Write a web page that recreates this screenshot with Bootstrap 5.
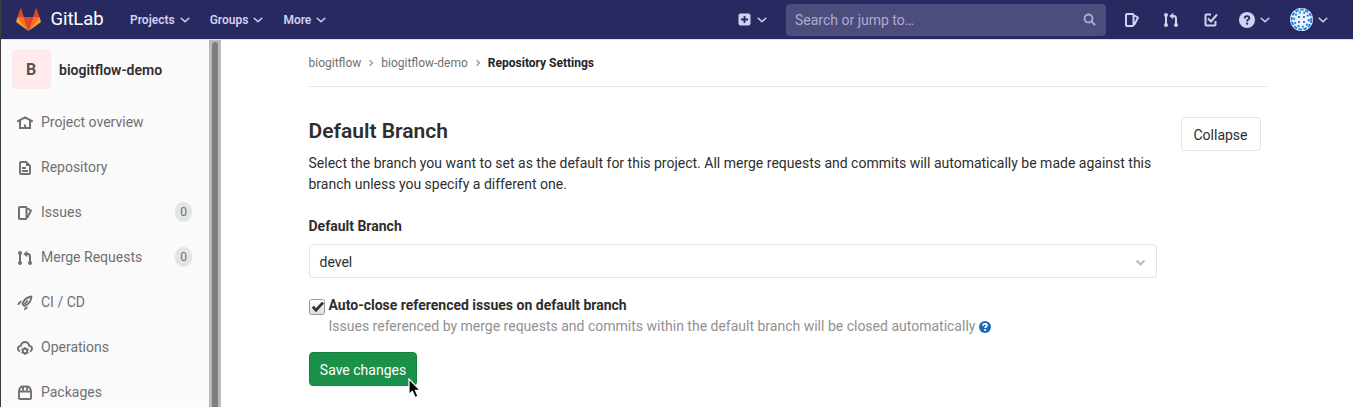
<!DOCTYPE html>
<html lang="en">
<head>
<meta charset="utf-8">
<meta name="viewport" content="width=device-width, initial-scale=1">
<title>Repository Settings · biogitflow-demo · GitLab</title>
<link href="https://cdn.jsdelivr.net/npm/bootstrap@5.3.0/dist/css/bootstrap.min.css" rel="stylesheet">
<style>
body{font-family:Roboto,"Noto Sans",sans-serif;font-size:14px;line-height:21px;color:#2e2e2e;height:407px;overflow:hidden;border-left:1px solid #3c3c3c;background:#fff}
svg{display:block;flex:none}
.topbar{height:40px;background:#292961;border-bottom:1px solid #dfdfe6;color:#d1d1f0;--bs-navbar-padding-y:0;padding:0 0 0 15px}
.wordmark{font-size:18.500px;line-height:39px;color:#fff;margin-left:9.500px;width:79.500px;letter-spacing:-.1px}
.menu-item{font-size:12px;font-weight:600;color:#d1d1f0;line-height:38px;padding-top:1px;white-space:nowrap}
.menu-item svg{margin-left:5px}
.menu-gap{margin-left:20px}
.tools{width:615px}
.search-box{width:320px;height:32px;border-radius:4px;background:#4c4c7d;color:#adadd0;padding:0 10px 0 9px;margin-left:19px}
.search-box span{padding-top:1px}
.side{width:208px;background:#fafafa;color:#707070;flex:none}
.project{height:60px;padding-left:10.500px;color:#2e2e2e;font-weight:600}
.initial{width:39px;height:39px;border-radius:4px;background:#ffebee;border:1px solid #f8e8ea;color:#555;font-size:16px;font-weight:700;margin:-2px 8.500px 0 0}
.side-link{height:45px;padding:0 17px 0 16px;color:#707070}
.side-link svg{margin-right:8px}
.count{width:17px;height:20px;border-radius:9px;background:#e5e5e5;font-size:12px;line-height:20px;text-align:center;margin:-1px 0 0 auto}
.scroll-track{width:12px;background:#bababa;flex:none;padding:2px 3px 0}
.scroll-thumb{background:#7b7f7e;border-radius:3px 3px 0 0;height:100%}
.page{margin-left:87.500px;width:958px}
.crumbs{height:47px;border-bottom:1px solid #e5e5e5;font-size:12px;color:#707070}
.crumbs svg{margin:0 7px}
.section-title{font-size:21px;font-weight:600;line-height:26px;margin:0 0 9px}
.btn-plain{border:1px solid #e3e3e3;border-radius:4px;color:#2e2e2e;background:#fff;font-size:14px;line-height:20px;padding:7px 0 5px;width:80px;height:34px;margin-top:-1px}
.field-label{margin:21px 0 7px}
.branch-select{width:848px;height:34px;border:1px solid #e3e3e3;border-radius:4px;padding:2px 10px 0}
.box{width:16px;height:16px;margin:4px 4px 0 0}
.hint{color:#919191}
.btn-save{background:#1a9149;border:1px solid #168040;border-radius:4px;color:#fff;font-size:14px;line-height:22px;padding:6px 0 6px 1px;width:108px;height:34px}
.pointer{left:99px;top:26px}
</style>
</head>
<body class="d-flex flex-column">
<svg width="0" height="0" class="position-absolute">
<symbol id="chev" viewBox="0 0 10 8"><path d="M1.200 2.200 5 5.800l3.800-3.600" fill="none" stroke="currentColor" stroke-width="1.500" stroke-linecap="round" stroke-linejoin="round"/></symbol>
<symbol id="right" viewBox="0 0 6 8"><path d="M1.500 1.200 4.500 4l-3 2.800" fill="none" stroke="#999" stroke-width="1.300"/></symbol>
<symbol id="issues" viewBox="0 0 16 16"><path d="M3 2h5.500a1 1 0 0 1 1 1v10a1 1 0 0 1-1 1H3a1 1 0 0 1-1-1V3a1 1 0 0 1 1-1zM10.500 3.500l3.500 2-3.600 7" fill="none" stroke="currentColor" stroke-width="2" stroke-linejoin="round"/></symbol>
<symbol id="merge" viewBox="0 0 16 16"><path d="M3 3v10M8.500 4H11q2 0 2 2.500V13" fill="none" stroke="currentColor" stroke-width="2"/><circle cx="3" cy="3" r="2" fill="currentColor"/><circle cx="3" cy="13" r="2" fill="currentColor"/><circle cx="13" cy="13" r="2" fill="currentColor"/><path d="M10.300.8v6.400L6.300 4z" fill="currentColor"/></symbol>
</svg>
<nav class="navbar topbar flex-nowrap justify-content-start">
  <svg width="25" height="24" viewBox="0 0 25 24"><path fill="#e24329" d="M12.500 23 17.100 9H7.900z"/><path fill="#fc6d26" d="M12.500 23 7.900 9H1.500zM12.500 23l4.600-14h6.400z"/><path fill="#fca326" d="M1.500 9 .2 13.200q-.2.800.5 1.400L12.500 23zM23.500 9l1.300 4.200q.2.800-.5 1.400L12.500 23z"/><path fill="#e24329" d="M1.500 9h6.400L5.200.8q-.4-.8-.8 0zM23.500 9h-6.400L19.800.8q.4-.8.8 0z"/></svg>
  <span class="wordmark">GitLab</span>
  <a class="menu-item d-flex align-items-center text-decoration-none">Projects <svg width="10" height="8"><use href="#chev"/></svg></a>
  <a class="menu-item menu-gap d-flex align-items-center text-decoration-none">Groups <svg width="10" height="8"><use href="#chev"/></svg></a>
  <a class="menu-item menu-gap d-flex align-items-center text-decoration-none">More <svg width="10" height="8"><use href="#chev"/></svg></a>
  <div class="tools d-flex align-items-center ms-auto">
    <svg width="13" height="13" viewBox="0 0 13 13"><rect x=".5" y=".5" width="12" height="12" rx="2" fill="#d1d1f0"/><path d="M6.500 3v7M3 6.500h7" stroke="#292961" stroke-width="1.800"/></svg>
    <svg width="10" height="8" style="margin-left:6px"><use href="#chev"/></svg>
    <div class="search-box d-flex align-items-center justify-content-between"><span>Search or jump to…</span><svg width="13" height="13" viewBox="0 0 13 13"><circle cx="5.500" cy="5.500" r="4" fill="none" stroke="currentColor" stroke-width="1.800"/><path d="m8.500 8.500 3.600 3.600" stroke="currentColor" stroke-width="2"/></svg></div>
    <svg width="16" height="16" style="margin-left:18px"><use href="#issues"/></svg>
    <svg width="16" height="16" style="margin-left:23px"><use href="#merge"/></svg>
    <svg width="16" height="16" viewBox="0 0 16 16" style="margin-left:24px"><path d="M8 2.500H3.500a1 1 0 0 0-1 1v9a1 1 0 0 0 1 1h8a1 1 0 0 0 1-1V9M5 6.500l3 3 6-7" fill="none" stroke="currentColor" stroke-width="2"/></svg>
    <svg width="16" height="16" viewBox="0 0 16 16" style="margin-left:20px"><circle cx="8" cy="8" r="8" fill="currentColor"/><path d="M5.700 6.400q.1-2.200 2.300-2.200t2.300 1.900c0 1.500-2.200 1.500-2.200 3.300" fill="none" stroke="#292961" stroke-width="1.800"/><circle cx="8.100" cy="11.700" r="1.100" fill="#292961"/></svg>
    <svg width="10" height="8" style="margin-left:5px"><use href="#chev"/></svg>
    <svg width="23" height="23" viewBox="0 0 23 23" style="margin-left:20px"><circle cx="11.500" cy="11.500" r="11.500" fill="#f2f4fb"/><g fill="none" stroke="#1a84e0"><circle cx="11.500" cy="11.500" r="9.900" stroke-width="2" stroke-dasharray="3.500 1.500"/><circle cx="11.500" cy="11.500" r="7.300" stroke-width="2" stroke-dasharray="2 2.500"/></g><path d="M8 8h2v2H8zM13 8h2v2h-2zM8 13h2v2H8zM13 13h2v2h-2z" fill="#1a84e0"/></svg>
    <svg width="10" height="8" style="margin-left:5px"><use href="#chev"/></svg>
  </div>
</nav>
<div class="d-flex flex-grow-1 overflow-hidden">
  <aside class="side">
    <div class="project d-flex align-items-center"><span class="initial d-flex align-items-center justify-content-center">B</span><span>biogitflow-demo</span></div>
    <a class="side-link d-flex align-items-center text-decoration-none"><svg width="16" height="16" viewBox="0 0 16 16"><path d="M.3 6.500 8 2.300l7.700 4.200M3 5.500V13h10V5.500M8 13v-3.500" fill="none" stroke="currentColor" stroke-width="2"/></svg><span>Project overview</span></a>
    <a class="side-link d-flex align-items-center text-decoration-none"><svg width="16" height="16" viewBox="0 0 16 16"><path d="M4 2h5l4 4v7a1 1 0 0 1-1 1H4a1 1 0 0 1-1-1V3a1 1 0 0 1 1-1zM5 8h4M5 11h6" fill="none" stroke="currentColor" stroke-width="1.900"/><path d="M9 1.500 13.500 6H9z" fill="currentColor"/></svg><span>Repository</span></a>
    <a class="side-link d-flex align-items-center text-decoration-none"><svg width="16" height="16"><use href="#issues"/></svg><span>Issues</span><span class="count">0</span></a>
    <a class="side-link d-flex align-items-center text-decoration-none"><svg width="16" height="16"><use href="#merge"/></svg><span>Merge Requests</span><span class="count">0</span></a>
    <a class="side-link d-flex align-items-center text-decoration-none"><svg width="16" height="16" viewBox="0 0 16 16"><path d="M5.500 9Q7 3 14.500 1.500 14 8.500 7.500 11zM7.500 9.200l3.300-3.600" fill="none" stroke="currentColor" stroke-width="1.800" stroke-linejoin="round"/><path d="M5 5.500Q1 6 .3 10l2.600-.6zM11 11q-.5 3.500-4 4.500l.5-2.800z" fill="currentColor"/></svg><span>CI / CD</span></a>
    <a class="side-link d-flex align-items-center text-decoration-none"><svg width="16" height="16" viewBox="0 0 16 16"><path d="M3 11.500Q.8 10.500 1 8.200 1.400 6.100 3.700 5.900 4.700 2 8 2t4.300 3.900q2.300.2 2.700 2.300.2 2.300-2 3.300" fill="none" stroke="currentColor" stroke-width="1.900"/><circle cx="8" cy="11" r="2.300" fill="none" stroke="currentColor" stroke-width="1.900"/><path d="M8 7v1.500M8 13.500V15M4.500 9l1.400.8M10.100 12.200l1.400.8M11.500 9l-1.400.8M5.900 12.200l-1.400.8" stroke="currentColor" stroke-width="1.500"/></svg><span>Operations</span></a>
    <a class="side-link d-flex align-items-center text-decoration-none"><svg width="16" height="16" viewBox="0 0 16 16"><path d="M2 6.500h12V13a1 1 0 0 1-1 1H3a1 1 0 0 1-1-1zM2 6.500Q2.500 1.500 6 1.500h4q3.500 0 4 5M6 2v3.200M10 2v3.200" fill="none" stroke="currentColor" stroke-width="1.900"/></svg><span>Packages</span></a>
  </aside>
  <div class="scroll-track"><div class="scroll-thumb"></div></div>
  <main class="page">
    <div class="crumbs d-flex align-items-center"><span>biogitflow</span><svg width="6" height="8"><use href="#right"/></svg><span>biogitflow-demo</span><svg width="6" height="8"><use href="#right"/></svg><strong class="text-dark">Repository Settings</strong></div>
    <div class="d-flex justify-content-between" style="padding:31px 6px 0 0">
      <div><h4 class="section-title">Default Branch</h4><p class="mb-0">Select the branch you want to set as the default for this project. All merge requests and commits will automatically be made against this<br>branch unless you specify a different one.</p></div>
      <button class="btn btn-plain">Collapse</button>
    </div>
    <div class="fw-bold field-label">Default Branch</div>
    <div class="branch-select d-flex align-items-center justify-content-between"><span>devel</span><svg width="11" height="9" viewBox="0 0 11 9"><path d="m1.500 2.500 4 3.800 4-3.800" fill="none" stroke="#bababa" stroke-width="2.200"/></svg></div>
    <div class="d-flex" style="margin-top:17px">
      <svg class="box" viewBox="0 0 16 16"><defs><linearGradient id="g" x2="0" y2="1"><stop stop-color="#fff"/><stop offset="1" stop-color="#ddd"/></linearGradient></defs><rect x=".5" y=".5" width="15" height="15" rx="2" fill="url(#g)" stroke="#999"/><path d="m3.800 7.800 3.200 3.400 7-7.600" fill="none" stroke="#2e3436" stroke-width="2.800"/></svg>
      <div><div class="fw-bold">Auto-close referenced issues on default branch</div><div class="hint d-flex align-items-center"><span>Issues referenced by merge requests and commits within the default branch will be closed automatically</span><svg width="12" height="12" viewBox="0 0 16 16" style="margin-left:4px"><circle cx="8" cy="8" r="8" fill="#1b69b6"/><path d="M5.300 6.400q.1-2.500 2.700-2.500t2.600 2c0 1.500-2.400 1.500-2.400 3.500" fill="none" stroke="#fff" stroke-width="2.300"/><circle cx="8.100" cy="12" r="1.400" fill="#fff"/></svg></div></div>
    </div>
    <div class="position-relative" style="margin-top:15px"><button class="btn btn-save">Save changes</button>
      <svg class="pointer position-absolute" width="14" height="21" viewBox="0 0 14 21"><path d="M1 1v15.500l3.400-3.200L7 19.500l3-1.200-2.600-6h4.800z" fill="#000" stroke="#fff" stroke-width="1.200"/></svg></div>
  </main>
</div>
<script src="https://cdn.jsdelivr.net/npm/bootstrap@5.3.0/dist/js/bootstrap.bundle.min.js"></script>
</body>
</html>
